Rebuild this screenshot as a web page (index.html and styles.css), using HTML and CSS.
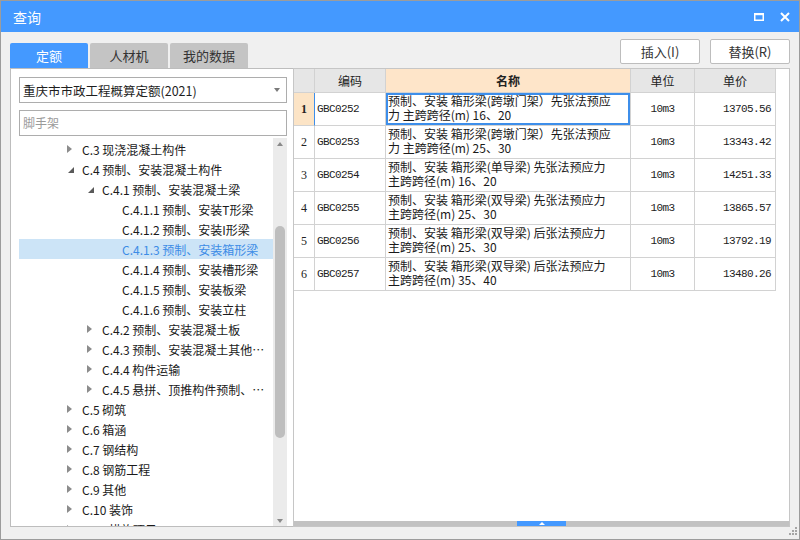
FILE: index.html
```html
<!DOCTYPE html>
<html lang="zh-CN">
<head>
<meta charset="utf-8">
<title>查询</title>
<link rel="stylesheet" href="styles.css">
</head>
<body>
<div class="window">
  <div class="titlebar">
    <span class="title">查询</span>
    <div class="win-controls">
      <svg class="ctl" width="10" height="8" viewBox="0 0 10 8"><rect x="0.75" y="1" width="8.5" height="6.25" fill="none" stroke="#fff" stroke-width="1.5"/><rect x="0" y="0" width="10" height="2.2" fill="#fff"/></svg>
      <svg class="ctl" width="10" height="10" viewBox="0 0 10 10"><path d="M1 1 L9 9 M9 1 L1 9" stroke="#fff" stroke-width="2" fill="none"/></svg>
    </div>
  </div>
  <div class="content">
    <div class="toolbar">
      <div class="tabs">
        <div class="tab active">定额</div>
        <div class="tab">人材机</div>
        <div class="tab">我的数据</div>
      </div>
      <div class="actions">
        <button class="btn">插入(I)</button>
        <button class="btn">替换(R)</button>
      </div>
    </div>
    <div class="panels">
      <div class="left">
        <div class="select"><span>重庆市市政工程概算定额(2021)</span><span class="caret"></span></div>
        <div class="search">脚手架</div>
        <div class="tree">
          <ul class="tree-list">
            <li class="node"><span class="tw closed"></span><span class="label">C.3 现浇混凝土构件</span></li>
            <li class="node"><span class="tw open"></span><span class="label">C.4 预制、安装混凝土构件</span></li>
            <li class="node l1"><span class="tw open"></span><span class="label">C.4.1 预制、安装混凝土梁</span></li>
            <li class="node l2"><span class="tw"></span><span class="label">C.4.1.1 预制、安装T形梁</span></li>
            <li class="node l2"><span class="tw"></span><span class="label">C.4.1.2 预制、安装I形梁</span></li>
            <li class="node l2 sel"><span class="tw"></span><span class="label">C.4.1.3 预制、安装箱形梁</span></li>
            <li class="node l2"><span class="tw"></span><span class="label">C.4.1.4 预制、安装槽形梁</span></li>
            <li class="node l2"><span class="tw"></span><span class="label">C.4.1.5 预制、安装板梁</span></li>
            <li class="node l2"><span class="tw"></span><span class="label">C.4.1.6 预制、安装立柱</span></li>
            <li class="node l1"><span class="tw closed"></span><span class="label">C.4.2 预制、安装混凝土板</span></li>
            <li class="node l1"><span class="tw closed"></span><span class="label">C.4.3 预制、安装混凝土其他构件</span></li>
            <li class="node l1"><span class="tw closed"></span><span class="label">C.4.4 构件运输</span></li>
            <li class="node l1"><span class="tw closed"></span><span class="label">C.4.5 悬拼、顶推构件预制、安装</span></li>
            <li class="node"><span class="tw closed"></span><span class="label">C.5 砌筑</span></li>
            <li class="node"><span class="tw closed"></span><span class="label">C.6 箱涵</span></li>
            <li class="node"><span class="tw closed"></span><span class="label">C.7 钢结构</span></li>
            <li class="node"><span class="tw closed"></span><span class="label">C.8 钢筋工程</span></li>
            <li class="node"><span class="tw closed"></span><span class="label">C.9 其他</span></li>
            <li class="node"><span class="tw closed"></span><span class="label">C.10 装饰</span></li>
            <li class="node"><span class="tw closed"></span><span class="label">C.11 措施项目</span></li>
          </ul>
          <div class="vscroll">
            <span class="arrow-up"></span>
            <span class="thumb"></span>
            <span class="arrow-down"></span>
          </div>
        </div>
      </div>
      <div class="right">
        <div class="grid">
          <div class="c h"></div>
          <div class="c h">编码</div>
          <div class="c h name">名称</div>
          <div class="c h">单位</div>
          <div class="c h">单价</div>

          <div class="c rh cur">1</div>
          <div class="c code">GBC0252</div>
          <div class="c nm sel">预制、安装 箱形梁(跨墩门架）先张法预应<br>力 主跨跨径(m) 16、20</div>
          <div class="c unit">10m3</div>
          <div class="c price">13705.56</div>

          <div class="c rh">2</div>
          <div class="c code">GBC0253</div>
          <div class="c nm">预制、安装 箱形梁(跨墩门架）先张法预应<br>力 主跨跨径(m) 25、30</div>
          <div class="c unit">10m3</div>
          <div class="c price">13343.42</div>

          <div class="c rh">3</div>
          <div class="c code">GBC0254</div>
          <div class="c nm">预制、安装 箱形梁(单导梁) 先张法预应力<br>主跨跨径(m) 16、20</div>
          <div class="c unit">10m3</div>
          <div class="c price">14251.33</div>

          <div class="c rh">4</div>
          <div class="c code">GBC0255</div>
          <div class="c nm">预制、安装 箱形梁(双导梁) 先张法预应力<br>主跨跨径(m) 25、30</div>
          <div class="c unit">10m3</div>
          <div class="c price">13865.57</div>

          <div class="c rh">5</div>
          <div class="c code">GBC0256</div>
          <div class="c nm">预制、安装 箱形梁(双导梁) 后张法预应力<br>主跨跨径(m) 25、30</div>
          <div class="c unit">10m3</div>
          <div class="c price">13792.19</div>

          <div class="c rh">6</div>
          <div class="c code">GBC0257</div>
          <div class="c nm">预制、安装 箱形梁(双导梁) 后张法预应力<br>主跨跨径(m) 35、40</div>
          <div class="c unit">10m3</div>
          <div class="c price">13480.26</div>
        </div>
        <div class="filler"></div>
        <div class="hscroll"><span class="handle"></span></div>
      </div>
    </div>
  </div>
  <svg class="grip" width="8" height="8" viewBox="0 0 8 8"><g fill="#A6A6A6"><rect x="6" y="0" width="2" height="2"/><rect x="3" y="3" width="2" height="2"/><rect x="6" y="3" width="2" height="2"/><rect x="0" y="6" width="2" height="2"/><rect x="3" y="6" width="2" height="2"/><rect x="6" y="6" width="2" height="2"/></g></svg>
</div>
</body>
</html>
```

FILE: styles.css
```css
* { box-sizing: border-box; }
html, body { margin: 0; padding: 0; }
body {
  width: 800px;
  height: 540px;
  overflow: hidden;
  font-family: "Noto Sans CJK SC", "Noto Sans", sans-serif;
  font-size: 12px;
  color: #1e1e1e;
  background: #fff;
}
.window {
  width: 800px;
  height: 540px;
  border: 1px solid #9c9c9c;
  background: #f0f0f0;
  display: flex;
  flex-direction: column;
  position: relative;
}
.titlebar {
  height: 31px;
  flex: none;
  background: #4499ff;
  color: #fff;
  display: flex;
  align-items: center;
  padding: 0 9px 0 12px;
}
.title { flex: 1; font-size: 14px; }
.win-controls { display: flex; align-items: center; gap: 16px; }
.ctl { display: block; }

.content {
  flex: 1;
  display: flex;
  flex-direction: column;
  padding: 0 9px 12px 9px;
  min-height: 0;
}
.toolbar {
  height: 36px;
  flex: none;
  display: flex;
  justify-content: space-between;
}
.tabs { display: flex; gap: 2px; align-self: flex-end; }
.tab {
  width: 78px;
  height: 25px;
  background: #c4c4c4;
  color: #333;
  font-size: 13px;
  display: flex;
  align-items: center;
  justify-content: center;
  border-radius: 2px 2px 0 0;
}
.tab.active { background: #4499ff; color: #fff; }
.actions { display: flex; gap: 10px; padding-top: 7px; }
.btn {
  width: 80px;
  height: 25px;
  padding: 0;
  background: #fff;
  border: 1px solid #bdbdbd;
  border-radius: 2px;
  font-family: inherit;
  font-size: 13px;
  color: #333;
}

.panels { flex: 1; display: flex; min-height: 0; }
.left {
  width: 283px;
  flex: none;
  background: #fff;
  border: 1px solid #bdbdbd;
  border-right: none;
  padding: 8px 6px 0 8px;
  display: flex;
  flex-direction: column;
}
.select {
  height: 26px;
  flex: none;
  border: 1px solid #adadad;
  padding: 0 6px 0 3px;
  font-size: 12.5px;
  display: flex;
  align-items: center;
  justify-content: space-between;
  color: #1e1e1e;
}
.caret {
  width: 0;
  height: 0;
  border-top: 4px solid #7a7a7a;
  border-left: 3.5px solid transparent;
  border-right: 3.5px solid transparent;
}
.search {
  height: 26px;
  flex: none;
  margin-top: 7px;
  border: 1px solid #adadad;
  padding-left: 3px;
  color: #9a9a9a;
  font-size: 12px;
  line-height: 24px;
}
.tree {
  flex: 1;
  margin-top: 2px;
  display: flex;
  min-height: 0;
  overflow: hidden;
}
.tree-list {
  flex: 1;
  min-width: 0;
  list-style: none;
  margin: 0;
  padding: 1px 0 0 0;
  overflow: hidden;
}
.node {
  height: 20px;
  display: flex;
  align-items: center;
  padding-left: 47px;
  white-space: nowrap;
  font-size: 12px;
  color: #1a1a1a;
}
.node.l1 { padding-left: 67px; }
.node.l2 { padding-left: 87px; }
.node.sel { background: #cce4f7; color: #3c8ce6; }
.tw { width: 16px; flex: none; display: flex; align-items: center; }
.tw.closed::before {
  content: "";
  margin-left: 1px;
  border-left: 5px solid #8c8c8c;
  border-top: 4px solid transparent;
  border-bottom: 4px solid transparent;
}
.tw.open::before {
  content: "";
  margin-left: 2px;
  margin-top: 1px;
  border-right: 6px solid #5a5a5a;
  border-top: 6px solid transparent;
}
.label { overflow: hidden; text-overflow: ellipsis; min-width: 0; }

.vscroll {
  width: 14px;
  flex: none;
  background: #ebebeb;
  position: relative;
  display: flex;
  flex-direction: column;
  justify-content: space-between;
  align-items: center;
  padding: 4px 0 3px 0;
}
.arrow-up {
  border-bottom: 4px solid #8a8a8a;
  border-left: 3.5px solid transparent;
  border-right: 3.5px solid transparent;
}
.arrow-down {
  border-top: 4px solid #8a8a8a;
  border-left: 3.5px solid transparent;
  border-right: 3.5px solid transparent;
}
.thumb {
  position: absolute;
  left: 2px;
  top: 88px;
  width: 10px;
  height: 212px;
  background: #bebebe;
  border-radius: 5px;
}

.right {
  flex: 1;
  background: #fff;
  border: 1px solid #c6c6c6;
  display: flex;
  flex-direction: column;
  min-width: 0;
}
.grid {
  display: grid;
  grid-template-columns: 21px 71px 245px 64px 81px;
  grid-template-rows: 24px;
  grid-auto-rows: 33px;
  width: 482px;
}
.c {
  border-right: 1px solid #d2d2d2;
  border-bottom: 1px solid #d2d2d2;
}
.h {
  background: #e6e6e6;
  display: flex;
  align-items: center;
  justify-content: center;
  font-size: 12px;
  color: #222;
}
.h.name { background: #fee5c9; font-weight: bold; }
.rh {
  display: flex;
  align-items: center;
  justify-content: center;
  font-family: "Liberation Serif", serif;
  font-size: 12px;
  color: #222;
}
.rh.cur { background: #fce4c6; font-weight: bold; border-right-color: #3d8eea; }
.code, .unit, .price {
  display: flex;
  align-items: center;
  font-family: "Liberation Mono", monospace;
  font-size: 11px;
  letter-spacing: -0.6px;
  color: #222;
}
.code { padding-left: 2px; }
.unit { justify-content: center; }
.price { justify-content: flex-end; padding-right: 4px; }
.nm {
  padding: 1px 0 0 2px;
  font-size: 12px;
  line-height: 14px;
  color: #1a1a1a;
  white-space: nowrap;
  overflow: hidden;
}
.nm.sel { box-shadow: inset 0 0 0 2px #3d8eea; }
.filler { flex: 1; }
.hscroll {
  height: 5px;
  flex: none;
  background: #c2c2c2;
  display: flex;
  justify-content: center;
}
.handle {
  width: 49px;
  height: 5px;
  background: #4499ff;
  display: flex;
  justify-content: center;
  align-items: flex-end;
  padding-bottom: 1px;
}
.handle::after {
  content: "";
  border-bottom: 3px solid #fff;
  border-left: 3px solid transparent;
  border-right: 3px solid transparent;
}
.grip { position: absolute; right: 2px; bottom: 4px; }
```
